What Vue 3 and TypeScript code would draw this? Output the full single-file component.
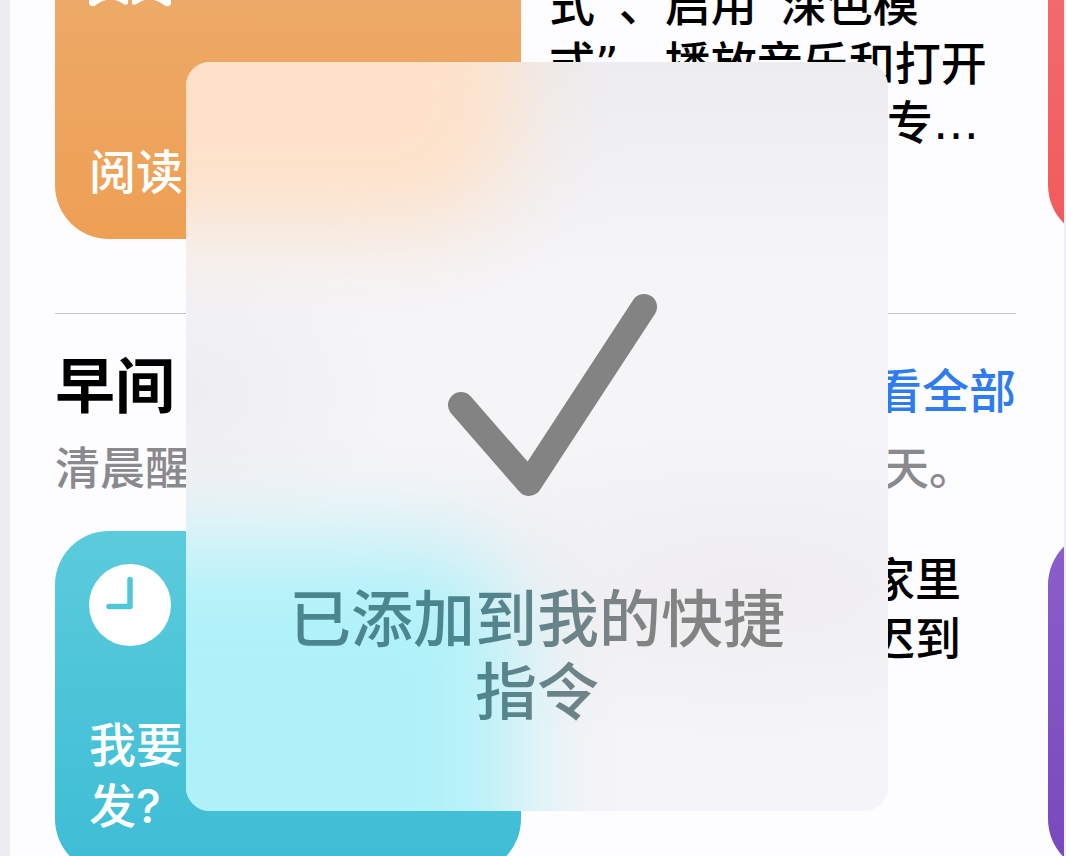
<script setup lang="ts">
interface Line {
  text: string
  indent: number
}

interface Shortcut {
  title: string[]
  tone: 'orange' | 'teal'
  icon: 'book' | 'clock'
  description: Line[]
  nextTone: 'red' | 'purple'
}

const reading: Shortcut = {
  title: ['阅读'],
  tone: 'orange',
  icon: 'book',
  description: [
    { text: '\u00a0', indent: 0 },
    { text: '式”、启用“深色模', indent: 0 },
    { text: '式”、播放音乐和打开', indent: 0 },
    { text: '专…', indent: 338 },
  ],
  nextTone: 'red',
}

const morning: Shortcut = {
  title: ['我要', '发?'],
  tone: 'teal',
  icon: 'clock',
  description: [
    { text: '家里', indent: 320 },
    { text: '迟到', indent: 320 },
  ],
  nextTone: 'purple',
}

const rows: Shortcut[] = [reading, morning]
</script>

<template>
  <div class="screen">
    <main class="gallery">
      <section v-for="(row, index) in rows" :key="row.icon" class="group">
        <template v-if="index === 1">
          <header class="group-head">
            <h2>早间</h2>
            <a href="#all">看全部</a>
          </header>
          <p class="summary"><span>清晨醒</span><span>天。</span></p>
        </template>
        <div class="carousel">
          <button type="button" class="card" :class="row.tone">
            <svg v-if="row.icon === 'clock'" class="icon" viewBox="0 0 82 82" aria-hidden="true">
              <circle cx="41" cy="41" r="41" fill="#fff" />
              <path d="M41 15.500V42.500H20" fill="none" stroke="#4fc7da" stroke-width="5.500" stroke-linecap="round" stroke-linejoin="round" />
            </svg>
            <svg v-else class="icon" viewBox="0 0 82 82" aria-hidden="true">
              <path d="M0 20Q20 6 39 19V74Q36 76 33 73Q20 65 7 75Q3 78 0 74Z" fill="#fff" />
              <path d="M82 20Q62 6 43 19V74Q46 76 49 73Q62 65 75 75Q79 78 82 74Z" fill="#fff" />
            </svg>
            <span class="card-title">
              <span v-for="line in row.title" :key="line">{{ line }}</span>
            </span>
          </button>
          <p class="description">
            <span v-for="line in row.description" :key="line.text" :style="{ paddingLeft: line.indent + 'px' }">{{ line.text }}</span>
          </p>
          <div class="card next" :class="row.nextTone"></div>
        </div>
      </section>
    </main>

    <div class="toast" role="status">
      <div class="glow warm"></div>
      <div class="glow cool"></div>
      <svg class="check" viewBox="0 0 210 204" aria-hidden="true">
        <path d="M13 112L81 190L196 14" fill="none" stroke="#848384" stroke-width="26" stroke-linecap="round" stroke-linejoin="round" />
      </svg>
      <p class="toast-text">已添加到我的快捷<br />指令</p>
    </div>
  </div>
</template>

<style>
body {
  margin: 0;
  background: #eeecef;
}
</style>

<style scoped>
.screen {
  position: relative;
  box-sizing: border-box;
  height: 100vh;
  overflow: hidden;
  border-left: 10px solid #eeecef;
  border-right: 2px solid #f0eef4;
  background: #fdfcfe;
  color: #000;
  font-family: Inter, "Noto Sans CJK SC", sans-serif;
  font-weight: 500;
}

.gallery {
  margin-top: -103px;
  padding-left: 45px;
}

.group + .group {
  margin-top: 74px;
}

.group-head {
  display: flex;
  align-items: baseline;
  justify-content: space-between;
  margin-right: 48px;
  padding-top: 32px;
  border-top: 1px solid #c4c3c7;
}

h2 {
  margin: 0;
  font-size: 60px;
  line-height: 80px;
  font-weight: 700;
}

.group-head a {
  color: #2f7cf0;
  font-size: 47px;
  line-height: 60px;
  text-decoration: none;
}

.summary {
  display: flex;
  justify-content: space-between;
  margin: 13px 90px 32px 0;
  color: #8a898e;
  font-size: 45px;
  line-height: 60px;
  white-space: nowrap;
}

.carousel {
  display: flex;
  overflow: hidden;
}

.card {
  display: flex;
  flex: none;
  flex-direction: column;
  justify-content: space-between;
  align-items: flex-start;
  box-sizing: border-box;
  width: 466px;
  height: 342px;
  padding: 33px 34px 37px;
  border: 0;
  border-radius: 54px;
  color: #fff;
  font: inherit;
  text-align: left;
}

.orange {
  background: linear-gradient(#edae70, #ee9f54);
}

.teal {
  background: linear-gradient(#5bcbdc, #3dbdd5);
}

.red {
  background: linear-gradient(#f37174, #f15a5b);
}

.purple {
  background: linear-gradient(#8a5fcb, #7748bc);
}

.icon {
  width: 82px;
  height: 82px;
}

.card-title {
  font-size: 47px;
  line-height: 61px;
}

.card-title span,
.description span {
  display: block;
}

.description {
  flex: 1 0 527px;
  margin: 0;
  padding: 20px 0 0 28px;
  box-sizing: border-box;
  font-family: "DejaVu Sans", "Noto Sans CJK SC", sans-serif;
  font-size: 46px;
  line-height: 59px;
  white-space: nowrap;
}

.toast {
  position: absolute;
  top: 62px;
  left: 50%;
  box-sizing: border-box;
  width: 66.6%;
  padding: 231px 0 82px;
  transform: translateX(-50%);
  overflow: hidden;
  border-radius: 24px;
  background:
    radial-gradient(ellipse 30% 20% at 0% 44%, #eeedf0, transparent),
    radial-gradient(ellipse 60% 22% at 80% 70%, #efedf0, transparent),
    linear-gradient(#edecef, #f5f4f7 28%);
}

.glow {
  position: absolute;
  left: -20%;
  width: 67%;
  filter: blur(46px);
}

.warm {
  top: -20%;
  height: 42%;
  border-radius: 0 0 100px 0;
  background: #fee1c8;
}

.cool {
  top: 64%;
  height: 60%;
  border-radius: 0 100px 0 0;
  background: #b0f1f9;
}

.check {
  position: relative;
  display: block;
  width: 210px;
  height: 204px;
  margin: 0 auto;
  padding-left: 32px;
}

.toast-text {
  position: relative;
  margin: 86px 0 0;
  background: linear-gradient(90deg, #4b858e 40%, #848384 66%);
  background-clip: text;
  color: transparent;
  font-size: 62px;
  line-height: 73px;
  text-align: center;
}
</style>
